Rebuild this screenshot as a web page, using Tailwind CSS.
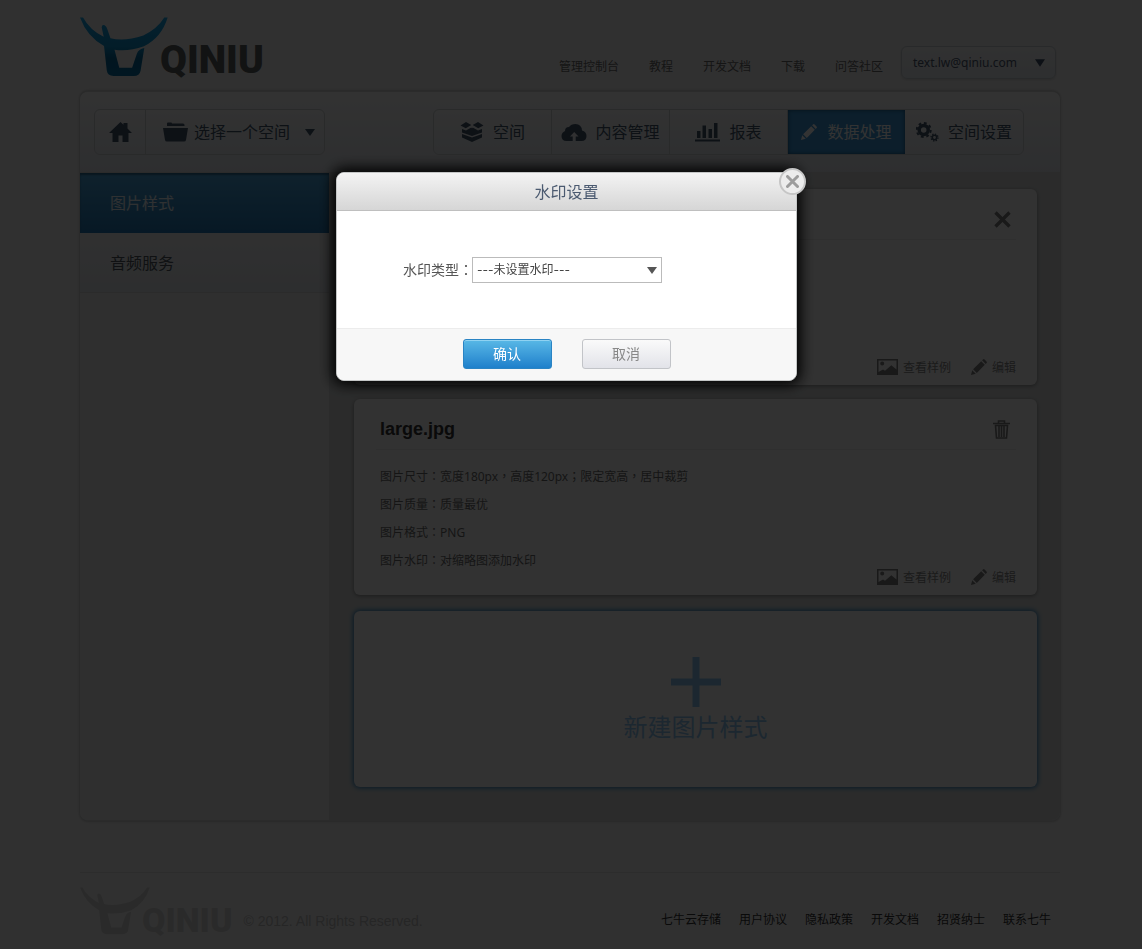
<!DOCTYPE html>
<html lang="zh-CN">
<head>
<meta charset="utf-8">
<meta name="viewport" content="width=device-width, initial-scale=1">
<title>七牛云存储</title>
<script src="https://cdn.jsdelivr.net/npm/@tailwindcss/browser@4"></script>
</head>
<body class="min-h-screen bg-[#f0f0f0] font-['Noto_Sans','Noto_Sans_CJK_SC',sans-serif] text-xs text-[#666]">

<svg class="absolute size-0" aria-hidden="true">
  <defs>
    <linearGradient id="bull-blue" x1="0" y1="0" x2="0" y2="1">
      <stop offset="0" stop-color="#1aa5e6"/><stop offset="0.5" stop-color="#0f8fca"/><stop offset="0.7" stop-color="#06689b"/><stop offset="1" stop-color="#0670a6"/>
    </linearGradient>
  </defs>
  <symbol id="bull" viewBox="33 38 260 176">
    <path d="M33 39L42 39Q62 76 103 96L97 68Q98 58 106 62Q112 66 114 74L123 100Q165 110 220 92Q262 72 282 39L292 39Q274 98 222 124Q176 140 135 134L149 187H187L201 146Q206 132 223 129L212 196Q209 212 192 212H132Q114 211 112 195L104 123Q54 96 33 39Z"/>
  </symbol>
  <symbol id="pencil" viewBox="0 0 16 16">
    <path d="M0 16L1.2 11.2L4.8 14.8ZM2.1 10.2L10.2 2.2L13.8 5.8L5.8 13.9ZM11.1 1.3L12 .4Q12.8-.3 13.6 .5L15.5 2.4Q16.3 3.2 15.6 4L14.7 4.9Z"/>
  </symbol>
  <symbol id="photo" viewBox="0 0 21 16">
    <path fill-rule="evenodd" d="M0 0H21V16H0ZM1.5 1.5V13L6 10.5L8 11.8L14.3 6.3L19.5 10.5V1.5ZM3.2 4.6A2 2 0 1 0 7.2 4.6A2 2 0 1 0 3.2 4.6Z"/>
  </symbol>
</svg>

<div class="pr-[2px]">
<div class="mx-auto w-full max-w-[980px]">

  <header class="flex h-[91px] items-start justify-between">
    <a href="#" aria-label="QINIU" class="flex pt-[17px] leading-none text-[#5a5f5f]">
      <svg class="h-[60px] w-[88px]" fill="url(#bull-blue)" aria-hidden="true"><use href="#bull"/></svg>
      <span class="-ml-[8px] pt-[23px] font-[Roboto] text-[39px] leading-[40px] font-black">QINIU</span>
    </a>
    <div class="flex items-center pt-[46px] pr-1">
      <nav class="mr-[18px] flex gap-[30px] pt-[9px] text-[#6a6a6a]">
        <a href="#">管理控制台</a><a href="#">教程</a><a href="#">开发文档</a><a href="#">下载</a><a href="#">问答社区</a>
      </nav>
      <button class="flex h-[33px] w-[155px] items-center justify-between rounded-md border border-[#c8cdd2] bg-linear-to-b from-[#f4f4f4] to-[#e2e8ee] pr-[10px] pl-[11px] text-[#4d5a70] shadow-sm">
        <span>text.lw@qiniu.com</span>
        <svg class="h-2 w-[10px]" viewBox="0 0 11 8" fill="#3f4f68" aria-hidden="true"><path d="M0 0H11L5.5 8Z"/></svg>
      </button>
    </div>
  </header>

  <main class="overflow-hidden rounded-lg border-y border-[#d4d6d8] bg-[#f0f0f0] shadow-[0_0_3px_#999]">
    <div class="flex h-[81px] items-start justify-between border-b border-[#d4d6d8] bg-linear-to-b from-[#fafafa] to-[#e2e6ec] pt-[17px] pr-[36px] pl-[14px] text-base text-[#43566c]">
      <div class="flex h-[46px] rounded-md border border-[#cdd0d3] bg-linear-to-b from-[#f8f8f8] to-[#e6eaf0]">
        <button aria-label="首页" class="flex w-[51px] items-center justify-center border-r border-[#cdd0d3]">
          <svg class="h-5 w-[23px]" viewBox="0 0 23 20" fill="currentColor" aria-hidden="true"><path d="M11.5 0L14.5 2.8V1H18.5V6.5L23 11H19.5V20H13.5V13.5H9.5V20H3.5V11H0Z"/></svg>
        </button>
        <button class="flex w-[178px] items-center pr-[9px] pl-[17px]">
          <svg class="h-5 w-[25px]" viewBox="0 0 25 20" fill="currentColor" aria-hidden="true"><path d="M4 4V1.5Q4 .5 5 .5H8Q9 .5 9 1.5H20Q21.500 1.500 21.500 3V4ZM0 6H25L23 18Q22.700 19.500 21 19.500H4Q2.300 19.500 2 18Z"/></svg>
          <span class="ml-[6px]">选择一个空间</span>
          <svg class="ml-auto h-[7px] w-[10px]" viewBox="0 0 10 7" fill="currentColor" aria-hidden="true"><path d="M0 0H10L5 7Z"/></svg>
        </button>
      </div>
      <nav class="flex h-[46px] rounded-md border border-[#cdd0d3] bg-linear-to-b from-[#f8f8f8] to-[#e6eaf0]">
        <a href="#" class="flex w-[118px] items-center justify-center gap-[9px] border-r border-[#cdd0d3]">
          <svg class="h-5 w-6" viewBox="0 0 24 20" fill="currentColor" aria-hidden="true"><path d="M6 0L11.300 3L5.800 6.200L.5 3.500ZM18 0L23.500 3.500L18.200 6.200L12.700 3ZM2 7L6 8.600L11.300 5.600V6.200L12 5.800L12.700 6.200V5.600L18 8.600L22 7V10.500L12 14L2 10.500ZM2 12L12 15.500L22 12V15.500L12 20L2 15.500Z"/></svg>
          空间</a>
        <a href="#" class="flex w-[118px] items-center justify-center gap-2 border-r border-[#cdd0d3]">
          <svg class="h-[17px] w-[26px]" viewBox="0 0 26 17" fill="currentColor" aria-hidden="true"><path fill-rule="evenodd" d="M5.500 17Q.5 17 .5 12Q.5 8.500 4 7Q4 3 8 3Q10 0 14.500 0Q20.500 0 21 6.500Q25.500 7.500 25.500 12Q25.500 17 20.500 17ZM11.700 17H14.700V12.500H17.500L13.200 8L9 12.500H11.700Z"/></svg>
          内容管理</a>
        <a href="#" class="flex w-[118px] items-center justify-center gap-[9px] border-r border-[#cdd0d3]">
          <svg class="h-[19px] w-[25px]" viewBox="0 0 25 19" fill="currentColor" aria-hidden="true"><path d="M0 16.500H25V18.500H0ZM2 8H5.500V15H2ZM7.500 2.500H11V15H7.500ZM13.500 6H17V15H13.500ZM19 0H22.500V15H19Z"/></svg>
          报表</a>
        <a href="#" class="flex w-[117px] items-center justify-center gap-[10px] bg-[#3c97d6] text-white shadow-[inset_0_0_4px_#14507a]">
          <svg class="size-4" fill="currentColor" aria-hidden="true"><use href="#pencil"/></svg>
          数据处理</a>
        <a href="#" class="flex w-[118px] items-center justify-center gap-[9px]">
          <svg class="h-5 w-[23px]" viewBox="0 0 23 20" fill="none" stroke="currentColor" aria-hidden="true"><circle cx="7.700" cy="8" r="4.500" stroke-width="3.500"/><circle cx="7.700" cy="8" r="7" stroke-width="2" stroke-dasharray="2.800 2.698"/><circle cx="18.500" cy="15.500" r="2.200" stroke-width="1.600"/><circle cx="18.500" cy="15.500" r="3.500" stroke-width="1.300" stroke-dasharray="1.400 1.349"/></svg>
          空间设置</a>
      </nav>
    </div>

    <div class="flex min-h-[647px]">
      <aside class="w-[250px] shrink-0 border-r border-[#d4d6d8] bg-[#e8e9e9]">
        <nav class="flex flex-col text-base text-[#4f5860]">
          <a href="#" class="flex h-[60px] items-center bg-linear-to-b from-[#4aa6dc] to-[#2579b6] pl-[30px] text-white/90 shadow-[inset_0_2px_2px_#2a6a94]">图片样式</a>
          <a href="#" class="flex h-[60px] items-center border-b border-[#d4d6d8] bg-linear-to-b from-[#f0f0f0] to-[#e0e4ea] pl-[30px]">音频服务</a>
        </nav>
      </aside>

      <div class="flex min-w-0 flex-1 flex-col gap-[14px] bg-[#d6d8d8] pt-4 pr-[23px] pl-6">
        <section class="flex h-[196px] flex-col rounded-md bg-[#fafafa] pr-[21px] pb-[10px] pl-[22px] shadow-[0_1px_4px_#888]">
          <div class="flex h-[51px] items-center justify-end border-b border-[#e8e8e8] pt-[11px] pr-[5px]">
            <button aria-label="关闭"><svg class="size-[17px]" viewBox="0 0 17 17" stroke="#7c7c7c" stroke-width="3.400" aria-hidden="true"><path d="M1.500 1.500L15.500 15.500M15.500 1.500L1.500 15.500"/></svg></button>
          </div>
          <div class="flex flex-1 items-end justify-end gap-[20px] text-[#868686]">
            <a href="#" class="flex items-end gap-[5px]"><svg class="h-4 w-[21px]" fill="#7c7c7c" aria-hidden="true"><use href="#photo"/></svg><span class="-mb-px leading-4">查看样例</span></a>
            <a href="#" class="flex items-end gap-[5px]"><svg class="size-4" fill="#7c7c7c" aria-hidden="true"><use href="#pencil"/></svg><span class="-mb-px leading-4">编辑</span></a>
          </div>
        </section>

        <section class="flex h-[196px] flex-col rounded-md bg-[#fafafa] pr-[21px] pb-[10px] pl-[22px] shadow-[0_1px_4px_#888]">
          <div class="flex h-[51px] items-center justify-between border-b border-[#e8e8e8] pt-[10px] pr-[6px] pl-1">
            <h2 class="font-['Liberation_Sans',Arial,sans-serif] text-lg font-bold text-[#333]">large.jpg</h2>
            <button aria-label="删除"><svg class="h-[19px] w-[17px]" viewBox="0 0 17 19" fill="none" stroke="#7c7c7c" stroke-width="1.600" aria-hidden="true"><path d="M0 3.500H17M5.500 3V1H11.500V3M2.500 5.500L3.500 18H13.500L14.500 5.500ZM6 6V17M8.500 6V17M11 6V17"/></svg></button>
          </div>
          <div class="flex flex-1 justify-between pt-3">
            <ul class="pl-1 leading-7 text-[#6c6c6c]">
              <li class="h-7">图片尺寸<span lang="zh-TW" class="font-['Noto_Sans_CJK_TC']">：</span>宽度180px<span lang="zh-TW" class="font-['Noto_Sans_CJK_TC']">，</span>高度120px<span lang="zh-TW" class="font-['Noto_Sans_CJK_TC']">；</span>限定宽高<span lang="zh-TW" class="font-['Noto_Sans_CJK_TC']">，</span>居中裁剪</li>
              <li class="h-7">图片质量<span lang="zh-TW" class="font-['Noto_Sans_CJK_TC']">：</span>质量最优</li>
              <li class="h-7">图片格式<span lang="zh-TW" class="font-['Noto_Sans_CJK_TC']">：</span>PNG</li>
              <li class="h-7">图片水印<span lang="zh-TW" class="font-['Noto_Sans_CJK_TC']">：</span>对缩略图添加水印</li>
            </ul>
            <div class="flex gap-[20px] self-end text-[#868686]">
              <a href="#" class="flex items-end gap-[5px]"><svg class="h-4 w-[21px]" fill="#7c7c7c" aria-hidden="true"><use href="#photo"/></svg><span class="-mb-px leading-4">查看样例</span></a>
              <a href="#" class="flex items-end gap-[5px]"><svg class="size-4" fill="#7c7c7c" aria-hidden="true"><use href="#pencil"/></svg><span class="-mb-px leading-4">编辑</span></a>
            </div>
          </div>
        </section>

        <button class="mt-[2px] flex h-[176px] flex-col items-center justify-center gap-[2px] rounded-md bg-[#fafafa] pt-[3px] text-2xl text-[#8cc4ee] shadow-[0_0_5px_1px_#2d82be]">
          <svg class="h-[50px] w-[50px]" viewBox="0 0 50 50" stroke="currentColor" stroke-width="7" aria-hidden="true"><path d="M0 25H50M25 0V50"/></svg>
          <span class="leading-9">新建图片样式</span>
        </button>
      </div>
    </div>
  </main>

  <footer class="mt-[51px] flex h-[76px] items-start justify-between border-t border-[#dcdcdc] pt-[14px]">
    <div class="flex text-[#d2d2d2]">
      <svg class="h-[48px] w-[70px]" fill="currentColor" aria-hidden="true"><use href="#bull"/></svg>
      <span class="-ml-[8px] pt-[16px] font-[Roboto] text-[34px] leading-[34px] font-black">QINIU</span>
      <small class="pt-[24px] pl-[11px] font-['Liberation_Sans',Arial,sans-serif] text-sm text-[#bcbcbc]">© 2012. All Rights Reserved.</small>
    </div>
    <nav class="flex gap-[18px] pt-[25px] pr-[9px] text-[#333]">
      <a href="#">七牛云存储</a><a href="#">用户协议</a><a href="#">隐私政策</a><a href="#">开发文档</a><a href="#">招贤纳士</a><a href="#">联系七牛</a>
    </nav>
  </footer>
</div>
</div>

<div class="fixed inset-0 flex items-start justify-center bg-black/80 pt-[172px] pr-[9px]">
  <form role="dialog" aria-labelledby="dialog-title" class="relative w-full max-w-[461px] rounded-lg border border-[#c4c6c6] bg-white shadow-[0_0_14px_4px_#000]">
    <h1 id="dialog-title" class="flex h-[38px] items-center justify-center rounded-t-lg border-b border-[#bfbfbf] bg-linear-to-b from-[#f3f3f3] to-[#d6d6d6] text-base text-[#4b5a70]">水印设置</h1>
    <button type="button" aria-label="关闭" class="absolute -top-[5px] -right-[10px] flex size-[27px] items-center justify-center rounded-full border-2 border-[#c6c6c6] bg-[#ececec]">
      <svg class="size-[13px]" viewBox="0 0 13 13" stroke="#9c9c9c" stroke-width="3" stroke-linecap="round" aria-hidden="true"><path d="M1.500 1.500L11.500 11.500M11.500 1.500L1.500 11.500"/></svg>
    </button>
    <div class="flex h-[117px] items-center pl-[66px]">
      <label for="watermark" class="text-sm text-[#555]">水印类型<span lang="zh-TW" class="font-['Noto_Sans_CJK_TC']">：</span></label>
      <div class="relative -ml-px">
        <select id="watermark" class="h-[26px] w-[190px] appearance-none border border-[#bbb] bg-white px-1 pt-px font-[Inter,'Noto_Sans_CJK_SC',sans-serif] text-xs text-[#444]">
          <option>---未设置水印---</option>
        </select>
        <svg class="pointer-events-none absolute top-[10px] right-[5px] h-[7px] w-[10px]" viewBox="0 0 10 7" fill="#555" aria-hidden="true"><path d="M0 0H10L5 7Z"/></svg>
      </div>
    </div>
    <div class="flex h-[52px] items-center justify-center gap-[30px] rounded-b-lg border-t border-[#ececec] bg-[#f7f7f7] pb-[2px] text-sm">
      <button class="h-[30px] w-[89px] rounded-[3px] border border-[#2a84c4] bg-linear-to-b from-[#58b8e6] to-[#1e80cb] text-white shadow-[inset_0_1px_0_#8fd2f2]">确认</button>
      <button type="button" class="h-[30px] w-[89px] rounded-[3px] border border-[#c2c4c8] bg-linear-to-b from-[#fafafa] to-[#e2e3e9] text-[#888]">取消</button>
    </div>
  </form>
</div>
</body>
</html>
